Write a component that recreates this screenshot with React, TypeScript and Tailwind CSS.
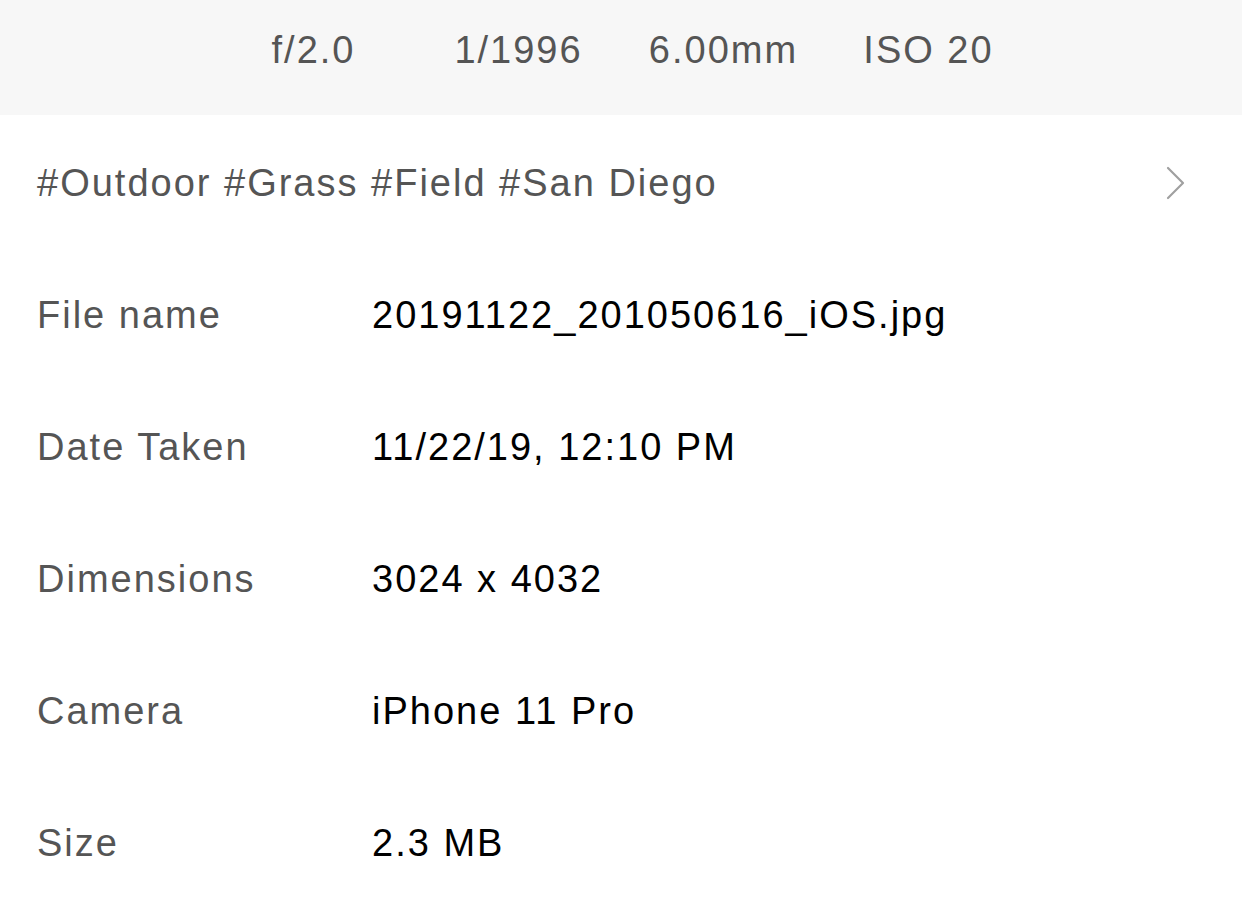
const EXPOSURE = ['f/2.0', '1/1996', '6.00mm', 'ISO 20']

const DETAILS = [
  { label: 'File name', value: '20191122_201050616_iOS.jpg' },
  { label: 'Date Taken', value: '11/22/19, 12:10 PM' },
  { label: 'Dimensions', value: '3024 x 4032' },
  { label: 'Camera', value: 'iPhone 11 Pro' },
  { label: 'Size', value: '2.3 MB' },
]

export default function App() {
  return (
    <main className="h-[908px] w-[1242px] overflow-hidden bg-white font-['Liberation_Sans',Arial,sans-serif] text-[38px] tracking-[2px]">
      <header className="flex h-[115px] items-center justify-center bg-[#f7f7f7] pb-[14px] text-[#555555]">
        {EXPOSURE.map((item) => (
          <span key={item} className="w-[205px] text-center">
            {item}
          </span>
        ))}
      </header>

      <section className="pt-[2px]">
        <div className="flex h-[132px] items-center justify-between pl-[37px] pr-[56px] text-[#555555]">
          <span>#Outdoor #Grass #Field #San Diego</span>
          <svg width="20" height="34" viewBox="0 0 20 34" fill="none">
            <path
              d="M2 2 L17 17 L2 32"
              stroke="#a0a0a0"
              strokeWidth="2.2"
              strokeLinecap="round"
              strokeLinejoin="round"
            />
          </svg>
        </div>

        {DETAILS.map((row) => (
          <div key={row.label} className="flex h-[132px] items-center pl-[37px]">
            <span className="w-[335px] text-[#555555]">{row.label}</span>
            <span className="text-black">{row.value}</span>
          </div>
        ))}
      </section>
    </main>
  )
}
